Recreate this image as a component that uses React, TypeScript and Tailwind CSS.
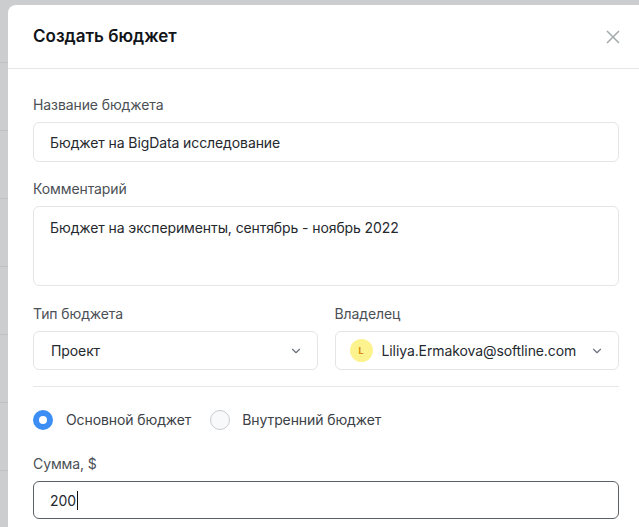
import React, { useState } from 'react';

const ChevronDown = () => (
  <svg width="14" height="14" viewBox="0 0 24 24" fill="none" stroke="#6b7280" strokeWidth="2" strokeLinecap="round" strokeLinejoin="round">
    <path d="M6 9l6 6 6-6" />
  </svg>
);

function Field({ label, children }: { label: string; children: React.ReactNode }) {
  return (
    <div className="flex flex-col">
      <label className="text-[14px] leading-5 text-[#4b5056] mb-[7px]">{label}</label>
      {children}
    </div>
  );
}

export default function App() {
  const [budgetType, setBudgetType] = useState('main');
  const rows = Array.from({ length: 8 });

  return (
    <div
      className="relative w-[639px] h-[527px] overflow-hidden bg-[#cccdcf]"
      style={{ fontFamily: 'Inter, "Noto Sans", sans-serif' }}
    >
      {/* таблица за модальным окном */}
      <div className="flex flex-col">
        {rows.map((_, i) => (
          <div key={i} className="h-[68px] border-b border-[#bfc0c3] first:h-[63px]" />
        ))}
      </div>

      <div className="absolute left-[8px] top-[5px] w-[636px] bg-white rounded-tl-[8px] tracking-[-0.1px]">
        <div className="flex items-center justify-between h-[64px] px-[25px] border-b border-[#e6e7e9]">
          <h2 className="text-[17px] font-semibold text-[#111418] tracking-normal">Создать бюджет</h2>
          <button className="mr-[-2px] text-[#a3aaae]">
            <svg width="16" height="16" viewBox="0 0 16 16" fill="none" stroke="currentColor" strokeWidth="1.5">
              <path d="M2 2l12 12M14 2L2 14" />
            </svg>
          </button>
        </div>

        <div className="px-[25px] pt-[26px] flex flex-col">
          <Field label="Название бюджета">
            <div className="h-[40px] border border-[#e3e5e8] rounded-[6px] px-[16px] flex items-center text-[14px] text-[#25292e]">
              Бюджет на BigData исследование
            </div>
          </Field>

          <div className="mt-[17px]">
            <Field label="Комментарий">
              <div className="h-[80px] border border-[#e3e5e8] rounded-[6px] px-[16px] pt-[10px] text-[14px] text-[#25292e]">
                Бюджет на эксперименты, сентябрь - ноябрь 2022
              </div>
            </Field>
          </div>

          <div className="mt-[18px] grid grid-cols-2 gap-[17px]">
            <Field label="Тип бюджета">
              <div className="h-[39px] border border-[#e3e5e8] rounded-[6px] pl-[17px] pr-[14px] flex items-center justify-between text-[14px] text-[#25292e]">
                <span>Проект</span>
                <ChevronDown />
              </div>
            </Field>
            <Field label="Владелец">
              <div className="h-[39px] border border-[#e3e5e8] rounded-[6px] pl-[14px] pr-[14px] flex items-center justify-between text-[14px] text-[#25292e]">
                <div className="flex items-center gap-[9px]">
                  <span className="w-[23px] h-[23px] rounded-full bg-[#fcf38f] flex items-center justify-center text-[9px] font-bold text-[#d98a0b]">
                    L
                  </span>
                  <span>Liliya.Ermakova@softline.com</span>
                </div>
                <ChevronDown />
              </div>
            </Field>
          </div>

          <div className="mt-[16px] border-t border-[#e6e7e9]" />

          <div className="mt-[22px] flex items-center gap-[12px] text-[14px] text-[#3c4147]">
            <button onClick={() => setBudgetType('main')} className="flex items-center gap-[13px]">
              {budgetType === 'main' ? (
                <span className="w-[20px] h-[20px] rounded-full bg-[#3d8ef4] flex items-center justify-center">
                  <span className="w-[8px] h-[8px] rounded-full bg-white" />
                </span>
              ) : (
                <span className="w-[20px] h-[20px] rounded-full border border-[#c9ccd0] bg-[#f8f9fa]" />
              )}
              <span>Основной бюджет</span>
            </button>
            <button onClick={() => setBudgetType('internal')} className="ml-[7px] flex items-center gap-[12px]">
              {budgetType === 'internal' ? (
                <span className="w-[20px] h-[20px] rounded-full bg-[#3d8ef4] flex items-center justify-center">
                  <span className="w-[8px] h-[8px] rounded-full bg-white" />
                </span>
              ) : (
                <span className="w-[20px] h-[20px] rounded-full border border-[#c9ccd0] bg-[#f8f9fa]" />
              )}
              <span>Внутренний бюджет</span>
            </button>
          </div>

          <div className="mt-[24px]">
            <Field label="Сумма, $">
              <div className="h-[38px] border border-[#5c6166] rounded-[6px] px-[16px] flex items-center text-[14px] text-[#25292e]">
                200<span className="w-px h-[19px] bg-[#111] ml-px" />
              </div>
            </Field>
          </div>

          <div className="h-[40px]" />
        </div>
      </div>
    </div>
  );
}
